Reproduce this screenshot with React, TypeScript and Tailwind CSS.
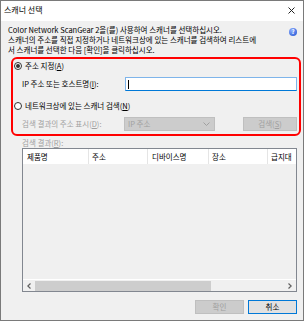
export default function App() {
  const font = "font-['Noto_Sans_CJK_KR','Noto_Sans',sans-serif]";
  return (
    <div className={`w-[304px] h-[321px] bg-[#f0f0f0] border border-[#7a7a7a] flex flex-col text-[7.5px] leading-[10px] text-black ${font}`}>
      {/* title bar */}
      <div className="h-[20px] bg-white flex items-start justify-between pl-[3px] pr-[8px] pt-[4px] shrink-0">
        <span className="text-[8px] leading-[10px]">스캐너 선택</span>
        <svg width="7" height="7" viewBox="0 0 7 7" className="mt-[2px]">
          <path d="M0.5 0.5 L6.5 6.5 M6.5 0.5 L0.5 6.5" stroke="#222" strokeWidth="1" />
        </svg>
      </div>

      {/* intro */}
      <div className="relative mt-[4px] ml-[7px] whitespace-nowrap">
        <div>Color Network ScanGear 2을(를) 사용하여 스캐너를 선택하십시오.</div>
        <div>스캐너의 주소를 직접 지정하거나 네트워크상에 있는 스캐너를 검색하여 리스트에</div>
        <div>서 스캐너를 선택한 다음 [확인]을 클릭하십시오.</div>
        <div className="absolute right-[6px] top-[3px] w-[8px] h-[8px] rounded-full bg-[radial-gradient(circle_at_35%_30%,#8fb0ff,#1d4fd0)] flex items-center justify-center text-white text-[6px] leading-[6px] font-bold">
          ?
        </div>
      </div>

      {/* red box */}
      <div className="ml-[10px] mt-[2px] w-[290px] h-[79px] border-2 border-[#ff0000] rounded-[6px] flex flex-col shrink-0">
        <div className="h-[14px] flex items-center">
          <span className="ml-[1px] w-[8px] h-[8px] rounded-full border border-[#333] bg-white flex items-center justify-center">
            <span className="w-[4px] h-[4px] rounded-full bg-[#333]" />
          </span>
          <span className="ml-[3px]">주소 지정(<u>A</u>)</span>
        </div>
        <div className="h-[14px] mt-[4px] flex items-center">
          <span className="ml-[9px] w-[103px]">IP 주소 또는 호스트명(<u>I</u>):</span>
          <div className="w-[172px] h-[14px] bg-white border border-[#7eb4ea] border-b-[#0078d7] flex items-center pl-[2px]">
            <span className="w-[1px] h-[9px] bg-black" />
          </div>
        </div>
        <div className="h-[14px] mt-[8px] flex items-center">
          <span className="ml-[1px] w-[8px] h-[8px] rounded-full border border-[#333] bg-white" />
          <span className="ml-[3px]">네트워크상에 있는 스캐너 검색(<u>N</u>)</span>
        </div>
        <div className="h-[14px] mt-[4px] flex items-center text-[#a0a0a0]">
          <span className="ml-[9px] w-[102px]">검색 결과의 주소 표시(<u>D</u>):</span>
          <div className="w-[91px] h-[14px] bg-[#cccccc] border border-[#bfbfbf] flex items-center justify-between pl-[3px] pr-[4px]">
            <span>IP 주소</span>
            <svg width="7" height="4" viewBox="0 0 7 4">
              <path d="M0.5 0.5 L3.5 3.5 L6.5 0.5" stroke="#a0a0a0" fill="none" strokeWidth="1" />
            </svg>
          </div>
          <div className="ml-[28px] w-[54px] h-[14px] bg-[#cccccc] border border-[#bfbfbf] flex items-center justify-center">
            검색(<u>S</u>)
          </div>
        </div>
      </div>

      {/* result label */}
      <div className="ml-[21px] mt-[1px] h-[11px] text-[#a0a0a0] flex items-center">
        <span>검색 결과(<u>R</u>):</span>
      </div>

      {/* list */}
      <div className="ml-[21px] w-[275px] h-[144px] border border-[#828790] flex flex-col justify-between shrink-0">
        <div className="h-[15px] bg-white flex items-center whitespace-nowrap">
          <div className="w-[66px] pl-[4px] border-r border-[#e5e5e5] h-full flex items-center">제품명</div>
          <div className="w-[59px] pl-[3px] border-r border-[#e5e5e5] h-full flex items-center">주소</div>
          <div className="w-[61px] pl-[4px] border-r border-[#e5e5e5] h-full flex items-center">디바이스명</div>
          <div className="w-[59px] pl-[3px] border-r border-[#e5e5e5] h-full flex items-center">장소</div>
          <div className="flex-1 pl-[3px] h-full flex items-center overflow-hidden">급지대</div>
        </div>
        <div className="h-[12px] border-t border-white bg-[#f0f0f0] flex items-center">
          <div className="w-[12px] h-full flex items-center justify-center">
            <svg width="4" height="6" viewBox="0 0 4 6">
              <path d="M3.5 0.5 L0.8 3 L3.5 5.5" stroke="#606060" fill="none" strokeWidth="1.2" />
            </svg>
          </div>
          <div className="w-[176px] h-[10px] bg-[#cdcdcd]" />
          <div className="flex-1" />
          <div className="w-[12px] h-full flex items-center justify-center">
            <svg width="4" height="6" viewBox="0 0 4 6">
              <path d="M0.5 0.5 L3.2 3 L0.5 5.5" stroke="#606060" fill="none" strokeWidth="1.2" />
            </svg>
          </div>
        </div>
      </div>

      {/* buttons */}
      <div className="mt-[8px] flex justify-end pr-[6px] gap-[4px]">
        <div className="w-[49px] h-[14px] bg-[#cccccc] border border-[#bfbfbf] text-[#a0a0a0] flex items-center justify-center">확인</div>
        <div className="w-[49px] h-[14px] bg-[#e1e1e1] border border-[#0078d7] flex items-center justify-center">취소</div>
      </div>
    </div>
  );
}
